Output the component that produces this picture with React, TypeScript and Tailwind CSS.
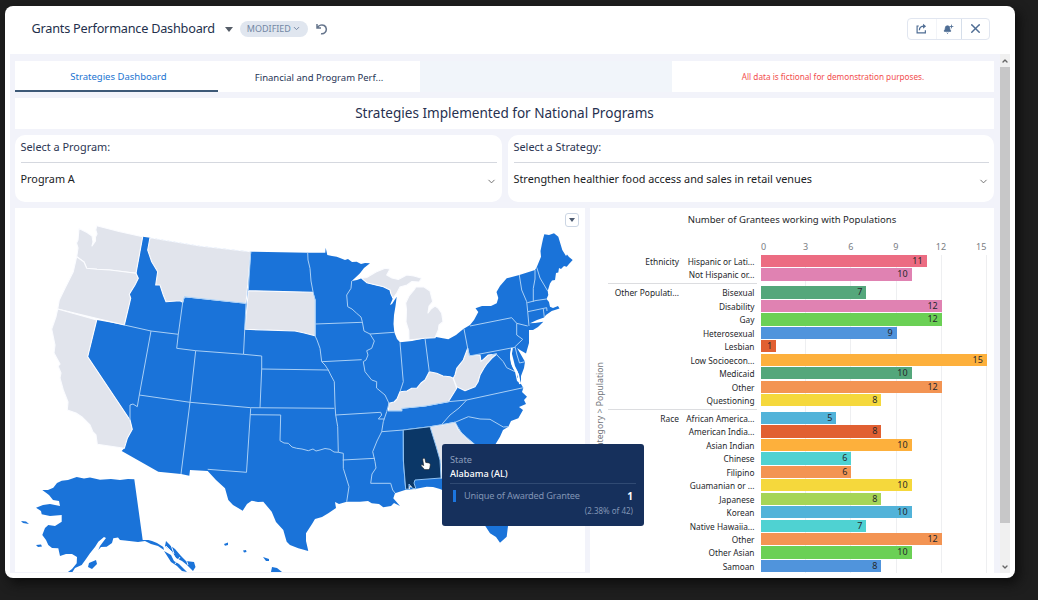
import { Bell, ChevronDown, ChevronUp, Plus, X } from "lucide-react";

type Row = { label: string; value: number; color: string };
type Group = { name: string; rows: Row[] };

const groups: Group[] = [
  {
    name: "Ethnicity",
    rows: [
      { label: "Hispanic or Lati...", value: 11, color: "#ec6c82" },
      { label: "Not Hispanic or...", value: 10, color: "#e082b2" },
    ],
  },
  {
    name: "Other Populati...",
    rows: [
      { label: "Bisexual", value: 7, color: "#54a77b" },
      { label: "Disability", value: 12, color: "#e082b2" },
      { label: "Gay", value: 12, color: "#6bd055" },
      { label: "Heterosexual", value: 9, color: "#5094dc" },
      { label: "Lesbian", value: 1, color: "#e16032" },
      { label: "Low Socioecon...", value: 15, color: "#fdb03c" },
      { label: "Medicaid", value: 10, color: "#54a77b" },
      { label: "Other", value: 12, color: "#f39453" },
      { label: "Questioning", value: 8, color: "#f5d83c" },
    ],
  },
  {
    name: "Race",
    rows: [
      { label: "African America...", value: 5, color: "#52b3d9" },
      { label: "American India...", value: 8, color: "#e16032" },
      { label: "Asian Indian", value: 10, color: "#fdb03c" },
      { label: "Chinese", value: 6, color: "#4fd2d2" },
      { label: "Filipino", value: 6, color: "#f39453" },
      { label: "Guamanian or ...", value: 10, color: "#f5d83c" },
      { label: "Japanese", value: 8, color: "#a6d557" },
      { label: "Korean", value: 10, color: "#52b3d9" },
      { label: "Native Hawaiia...", value: 7, color: "#4fd2d2" },
      { label: "Other", value: 12, color: "#f39453" },
      { label: "Other Asian", value: 10, color: "#6bd055" },
      { label: "Samoan", value: 8, color: "#5094dc" },
    ],
  },
];

const mainland =
  "142.7,236.7 150,237.7 200,246 250.7,251.7 307.7,252.7 325.3,252.7 325.7,247.7 327.3,255 332,256 336.7,256.7 340,258 345,260 348,259 352,262 356.7,261.7 361,264 365,263 370,263.3 364,268 360,273.3 355,278 351.7,281 357,280 361.7,278.3 366.7,282.7 375,285 383.3,286.7 388,288 390,290 391,294 393,298.3 390,305 392,304 396.7,296.7 395.5,306 394,315 393.5,324 394.3,332.3 397,339 400,342.3 412,341 425,338.3 436,337 448.3,339.3 456,335 463.3,329 470,325 474,320 478.3,312 475.5,308.3 482,306 491,306 496.7,303.3 498.3,298 496.5,292 500,286 506.7,278.3 519.3,275 535,270 536.7,267.3 541,256.7 540.5,251 541.7,245 543,239 544.3,234.3 549,235 554,233.3 558.3,236.7 562.3,250 566,256 567,254.5 569,257 572.7,260 569,264 566.7,266.7 564,266 561,269 559,268 558.3,272.5 556,273 555,280 552,280.5 550,283.5 547.7,291 548.3,295 546.5,299 549,302 550,306.7 553,308 558,306 559.5,308.5 551.7,311 546,315 544,317.5 537,320 530,323.3 535,323 543.3,321.7 538,327 533,330 529,330 529,335 529,343 526,353.5 520,350 517,348 520,353 525,361.7 524,368 521,376 521,383.3 519,379 517,377 518,372 515,366 513,358 511,350 510,356 512,366 515,371.7 517,381 521,384 523.3,388 522,392 527,396.7 524,400 526,404 519,407 523,410 518.3,418.3 511,421 508.3,426.7 503,430 500,436.7 495,445 488,454 484,465 486,480 492,495 502,512 508,526 506.7,536.7 500,542.7 496,537 490,533.3 484,524 474,505 460,490 449,493 440,489 433,487 426.7,486.7 415,489 405,490 395,493.3 393.3,498.3 400,506 394,503 391,506 383.3,507.3 379,504 371.7,503.3 368,501 360,501.7 346.7,501.7 339,504 335,502 336,508 328.3,513.3 322,517 315,519 312,524 306,533.3 306,541 308.3,551 298.3,548.3 290,545 286.7,541.7 285,536 283.3,530 276,522 271.7,511.7 263.3,501.7 258,502 251.7,500.7 247,504 242.7,510.7 233,505 228.3,500 225,488.3 216,480 207.7,471 190,470 189.3,475.7 181,474 158.3,471.7 121.7,451 124.3,448.3 124,444 127.3,438.3 132.3,429.3 130,420 87.7,356.7 96.7,320 124.3,325 130.7,298.3 129.3,294.3 138.3,278.3 136,273.3";

const grayStates = [
  "79,228.5 87,232.5 92,236 93,242 92,246 95.5,241 95.5,237 97,234 95.8,230 96.7,225.7 119,231.5 142.7,236.7 136,273.3 110,270 97,269.3 86.7,268.3 84,262 76.7,256.7 78,248 76.5,243 78,240",
  "76.7,256.7 84,262 86.7,268.3 97,269.3 110,270 136,273.3 138.3,278.3 135,285 129.3,294.3 130.7,298.3 124.3,325 57.7,309 59.3,300 65,288.3 73.3,271.7",
  "57.7,309 96.7,320 87.7,356.7 130,420 132.3,429.3 127.3,438.3 124.3,448.3 97.3,444.3 96,435 93,432 90,425 81.7,416.7 76,413 67.3,410 68,402 63.3,390 60,378 61,373 58,366 60,364 54,353 55,345 51.7,329 56,316.7",
  "150,237.7 200,246 250.7,251.7 246,303.3 184.3,296.7 182.7,302.3 180,300.7 166,301.7 163.3,295 160,285 155.7,285 157.7,271.7 151.7,261.7 147.7,250",
  "248.3,290.7 312.7,292.3 315,300 315,335.7 303.3,332.7 295,331 245,329.3",
  "409,340 408.8,331 406,322 406.5,310 405.7,303 409,296 414,290 416,287 424,287 430,291 432.7,301.7 429,306 428,313 431,309 435,306 438,308 441.7,313.3 443,321.7 439,325 438.3,330 435,337.7 425,338.3",
  "366.7,277.5 376,272 385,268.3 390,269 386.7,275 392,278 398.3,279.5 406.7,275 414,276 421.7,278.3 419,282 412,281.5 407,285 400,287 396.7,293.3 393,298.3 391,294 390,290 383.3,286.7 366.7,282.7 361.7,278.3",
  "388.3,410.7 389,403.3 394,402 397,399 400,391.7 407,391 411.7,388.3 416.7,388.3 421,383 425,380 429.3,371.7 436.7,373.3 443,376 450,376.7 453.3,378.3 456.7,388.3 448.3,401.7 425,406 401.7,408.3 401.7,410.7",
  "467.7,348.3 469.3,356 480,355 481,361.7 488.3,355 496.7,354 491.7,358.3 487.3,363.3 484,368 480,375 478,382 475,386.7 465,390.7 456.7,386.7 453.3,378.3 455,375 456.7,368.3 463.3,360",
  "430,426.7 442,425 455,422.3 458,429 461.7,433.3 469,440 475,445 486,462 480,478 441,478 441,464",
];

const borders = [
  "124.3,325 151,331 178.3,334.3",
  "182.7,302.3 178.3,334.3 176.7,348.3 195.7,350.7 243.5,354.3 261.7,356 261.7,369 328.3,370",
  "184.3,296.7 182.7,302.3",
  "184.3,296.7 246,303.3 243.5,354.3",
  "151,331 139.3,395 137.3,406.7 133,404 130,405 130,420",
  "195.7,350.7 190,402.3 181,474",
  "139.3,395 190,402.3 250.7,407.7 334.3,408.3",
  "261.7,369 260,407.8",
  "250.7,408.3 246.5,472.3 207.7,469.3",
  "250.2,414.7 280.7,415 280,440.7 284,443 288.3,443.3 292,447 296.7,448.3 302,449 308.3,450.7 313,449 316,451 320,450 325,448.5 330,449.3 334,452 338.3,452.3 343.3,453.3",
  "250.7,251.7 248.3,290.7",
  "307.7,252.7 308,260 310,268.3 311,281 313.3,293.3 315,300 315,335.7 317,340 320,348.3 321.7,361.7 325,365 328.3,370 330.7,375 334.3,381.7 335,405 335.7,415 337.7,426.7 338.3,452.3",
  "315,324 362.3,322.3",
  "351.7,281 351,288.3 346.7,295 347.7,306.7 352,309 356.7,313.3 361,317 362.3,321.7 364,331 370,334 374.3,341 371.7,348.3 366.7,350.7 368,355 366,360 363.3,361.7 365,371.7 371.7,380 376.7,381.7 376.5,388 385,395 389,403.3 386.7,411.7 383.3,421.7 381.7,431.7 377,441 372.7,451.7 375,461.7 376,468 372,474 370.7,483.3 390.7,483.3 392.7,490 395,493",
  "370,334 394.3,332.3",
  "321.7,361.7 361.7,359.7",
  "335.7,415 380.7,412.3 381.7,415 378.3,419 384.3,419",
  "400,342.3 402.7,375 403.3,381.7 400,391.7",
  "425,338.3 429.3,371.7",
  "464,329 467.7,348.3 469.3,356 515,347.3",
  "470,326 511.7,317.7 516.7,323.3 527.7,326",
  "516.7,323.3 516.7,335 522.7,339.3 515,346.7 517,355 519.5,363 525,361.7",
  "519.3,275 521.7,290 526.7,301.7 527.7,311.7 529,326",
  "535,270 535,279 533.3,288.3 533.3,301.7",
  "536.7,267.3 540,278 547.7,291",
  "527.3,302.7 536,300.5 546.5,299",
  "527.7,311.7 546.7,307.7 547,311",
  "543.3,309 544.3,317",
  "342.7,460 375,458.3",
  "343.3,453.3 343.3,468.3 349,486.7 346.7,501.7",
  "381.7,431.7 403.3,430 430,426.7 455,422.3 468.3,416.7 480,419 490,419.3 503.3,427 508,426.7",
  "388.3,410.7 401.7,410.7 401.7,408.3 425,406 448.3,401.7 466.7,400 523.3,387.7",
  "466.7,400 459,408 450,415 441.7,424.5",
  "403.3,430 403.3,460 405.7,489.3",
  "491.7,355 496,354 503.3,361.7 506.7,367.7 515,371.7",
  "455,422.3 461.7,433.3 475,445",
];

const alaska =
  "134.3,479.3 142.7,540 148.3,540 152,541 157,543 163.3,547 164,550 158,546 151,544 145,541 138,542 125,540.5 120,540 118,537.5 113.3,538.3 112,543 106.7,546.7 101,547 98.3,550 100,546 106,538 104,537 98.3,541.7 95,547 90,553.3 86,559 81.7,565 75,568 72,572.7 67,572.7 72,569 76.7,563.3 77,557 72,554 66,554 60,556 58.3,548.3 52,548 48.3,545 46,540 42.3,535 45,528 48.3,525 55,526 61.7,521.7 61.7,515 50,516 41.7,514.3 41,511 36,507.7 43,505 50,504 60,506 59,501 53,500 49,495 42.3,490 48,490 53.3,487.7 57,483 61.7,480.7 68,480 76.7,477 84,478.5 90,477.5 100,479.7 111,479 120,480 128,479";

const islands = [
  "166,541 171,546 175,549 181,556 186,561 194,562 195.5,567 193,571 187,565 182,561 176,558 171,551 165,546",
  "164,551 171,555 174,561 179,564 187,572 182,571 177,566 171,562",
  "89,563 96,560 97,564 92,569 88,567",
  "21,521 26,521.5 29,524 23,523",
  "36,545 41,544.5 42,546.5 38,547",
  "224,544 228,542.5 228,545 225,545.7",
  "243,550.5 246,550 246.5,552 244,552.5",
  "255,554.5 257,555",
  "263,557 269,559 269,561 266,561",
  "272,567 277,568 282,572 271,572",
];

function StateMap() {
  return (
    <svg viewBox="15 208 570 364" className="block h-[364px] w-[570px]" role="img">
      <polygon points={mainland} fill="#1a73d9" />
      <polygon points={alaska} fill="#1a73d9" />
      {islands.map((p) => (
        <polygon key={p} points={p} fill="#1a73d9" />
      ))}
      <path d="M166 546l6 6 4 7 7 6M171 545l3 9M180 557l-5 7M186 559l2 6" stroke="#fff" strokeWidth="0.9" fill="none" />
      <g fill="#e1e4ec" stroke="#fbfcff" strokeWidth="1.1" strokeLinejoin="round">
        {grayStates.map((p) => (
          <polygon key={p} points={p} />
        ))}
      </g>
      <g fill="none" stroke="#a9cff5" strokeWidth="1" strokeLinejoin="round">
        {borders.map((p) => (
          <polyline key={p} points={p} />
        ))}
      </g>
      <path d="M512 348c-2 8-1 15 2 20l4 6 2 10" stroke="#fff" strokeWidth="1.8" fill="none" />
      <polygon
        points="403.3,430 430,426.7 436,446 440,460 441,478 415,480 414,483 416,489 412,488 409,484 409,489 405.7,489.3 403.5,462"
        fill="#0b3767"
        stroke="#8fc2f3"
        strokeWidth="1"
      />
      <path d="M409.5 489l.5-3 1.5.5" fill="none" stroke="#eee" strokeWidth="1" />
      <path
        d="M423.2 458.5c.9-.5 1.7 0 1.9.9l.6 3 3 .5c1.2.3 1.7.9 1.6 2l-.5 3.3-1.2 1.4h-4l-3.3-3.7c-.4-.8.4-1.4 1.1-1l1.3.7-.9-5.7c-.1-.6 0-1.1.4-1.4z"
        fill="#fff"
        stroke="#222"
        strokeWidth="0.6"
      />
    </svg>
  );
}

function Header() {
  return (
    <header className="flex h-12 shrink-0 items-center pb-[3px] pl-[21.5px] pr-[20px]">
      <h1 className="text-[12.7px] tracking-[-0.22px] text-[#23304c]">Grants Performance Dashboard</h1>
      <span className="ml-[10px] mt-0.5 h-0 w-0 border-x-4 border-t-[5px] border-x-transparent border-t-[#565d68]" />
      <button className="ml-[7px] flex h-4 w-[68px] items-center justify-center gap-px rounded-full bg-[#e0e6ef] text-[9px] text-[#7286a4]">
        MODIFIED
        <ChevronDown size={9} strokeWidth={2.6} />
      </button>
      <svg viewBox="0 0 12 12" className="ml-2 h-3 w-3" fill="none" stroke="#66758c" strokeWidth="1.5">
        <path d="M1 1v4h4M1.4 4.8C3 2 6 1.2 8.2 2.5c2.5 1.5 2.8 5 .8 7-1 1-2.6 1.5-4 1.2" />
      </svg>
      <div className="ml-auto flex h-[22px] w-[83px] rounded border border-[#e1e6f0] text-[#4f6d94]">
        <button className="flex w-7 items-center justify-center">
          <svg viewBox="0 0 12 12" className="h-[11px] w-[11px]" fill="none" stroke="currentColor" strokeWidth="1.3">
            <path d="M3 3.3H1.2v7.4h9V8M3.7 7.8c0-3 2-4.3 5.3-4.3" />
            <path d="M7.7.8L11 3.5 7.7 6.3z" fill="currentColor" stroke="none" />
          </svg>
        </button>
        <button className="relative flex w-[26px] items-center justify-center border-l border-[#f2f4f8]">
          <Bell size={9} fill="currentColor" className="-ml-1 mt-0.5" />
          <Plus size={5} strokeWidth={4} className="absolute right-[7px] top-[5px]" />
        </button>
        <button className="flex w-7 items-center justify-center border-l border-[#d5deea]">
          <X size={15} strokeWidth={2.4} />
        </button>
      </div>
    </header>
  );
}

function Selector({ label, value, width }: { label: string; value: string; width: string }) {
  return (
    <section className={`flex h-[67px] flex-col rounded-[10px] bg-white px-[5.5px] ${width}`}>
      <h3 className="flex h-[28px] items-center border-b border-[#d5d8df] pb-[2px] text-[10.9px] text-[#2b3552]">{label}</h3>
      <div className="flex h-[33px] items-center justify-between text-[10.85px] text-[#202124]">
        {value}
        <ChevronDown size={11} strokeWidth={2} className="mt-1 text-[#666]" />
      </div>
    </section>
  );
}

function PopulationChart() {
  return (
    <section className="flex h-[365px] w-[404px] flex-col overflow-hidden bg-white text-[#26282c]">
      <h3 className="pt-[5px] text-center text-[9.55px] leading-[14px]">Number of Grantees working with Populations</h3>
      <div className="mt-[12px] flex h-[15px] text-[9px] leading-[15px] text-[#7a7d83]">
        <div className="w-[151px] shrink-0" />
        <div className="flex w-[253px]">
          {[0, 3, 6, 9, 12, 15].map((n) => (
            <span key={n} className={n === 0 ? "w-[42px] shrink-0 pl-5" : "w-[45.15px] shrink-0 text-center last:-ml-[5px]"}>
              {n}
            </span>
          ))}
        </div>
      </div>
      <div className="mt-px flex min-h-0 flex-1">
        <div className="w-[18px] shrink-0 pt-[107px]">
          <span className="ml-[4px] block w-[13px] rotate-180 whitespace-nowrap text-[8.7px] leading-[13px] text-[#72757b] [writing-mode:vertical-rl]">
            Category &gt; Population
          </span>
        </div>
        <div className="relative flex flex-1 flex-col">
          <div className="absolute inset-y-0 left-[153px] flex w-[227px]">
            {[0, 1, 2, 3, 4].map((n) => (
              <span key={n} className="w-[45.2px] shrink-0 border-r border-[#eeeff1]" />
            ))}
          </div>
          {groups.map((g, i) => (
            <div key={g.name} className={`relative flex shrink-0 ${i > 0 ? "mt-[4.6px]" : ""}`}>
              {i > 0 && <span className="absolute -top-[3px] left-0 w-[149px] border-t border-[#dcdde0]" />}
              <span className="w-[71px] shrink-0 text-right text-[8.4px] leading-[13.45px]">{g.name}</span>
              <div className="flex-1">
                {g.rows.map((r) => (
                  <div key={r.label} className="flex h-[13.45px]">
                    <span className="w-[75.5px] shrink-0 whitespace-nowrap text-right text-[8.3px] leading-[13.45px]">{r.label}</span>
                    <span
                      className="ml-[6.5px] h-[12.2px] pr-1 text-right text-[9px] leading-[12px]"
                      style={{ width: `${r.value * 15.06}px`, background: r.color }}
                    >
                      {r.value}
                    </span>
                  </div>
                ))}
              </div>
            </div>
          ))}
        </div>
      </div>
    </section>
  );
}

function Tooltip() {
  return (
    <div className="absolute left-[442px] top-[444px] flex h-[82px] w-[202px] flex-col rounded-[3px] bg-[#16305c] px-2 pt-[9px] text-[9.2px]">
      <span className="leading-[13px] text-[#8b9dbb]">State</span>
      <span className="font-medium leading-[15px] text-white">Alabama (AL)</span>
      <div className="mt-[2px] flex h-[25px] items-center border-t border-[#304a73] pl-[3px] pr-[3px] text-[9.2px] text-[#8194b4]">
        <span className="h-3 w-[3px] bg-[#1b75df]" />
        <span className="ml-2 tracking-[-0.18px]">Unique of Awarded Grantee</span>
        <span className="ml-auto text-[10px] font-bold text-white">1</span>
      </div>
      <span className="pr-[3px] text-right text-[8px] leading-[6px] text-[#8194b4]">(2.38% of 42)</span>
    </div>
  );
}

export default function App() {
  return (
    <div className="relative h-[600px] w-[1038px] overflow-hidden bg-[#1e1e1e] pl-[5px] pt-[6px] font-['Noto_Sans',sans-serif]">
      <main className="flex h-[572px] w-[1010px] flex-col rounded-[8px] bg-white px-[5px] pb-[5px] shadow-[4px_5px_12px_#0c0c0c]">
        <Header />
        <div className="flex h-[519px]">
          <div className="flex w-[990px] flex-col bg-[#f2f3fa] pl-[5px] pt-[7px]">
            <div className="flex h-[31px] w-[979px] bg-[#f1f5fa] text-[9.5px]">
              <button className="flex w-[203px] items-center justify-center border-b-2 border-[#3d5977] bg-white pl-1 pt-[3px] text-[#2174d1]">
                Strategies Dashboard
              </button>
              <button className="flex w-[202px] items-center justify-center bg-white pt-[3px] text-[#273456]">Financial and Program Perf...</button>
              <p className="ml-auto flex w-[322px] items-center justify-center bg-white pt-0.5 text-[8.2px] text-[#f24e4e]">
                All data is fictional for demonstration purposes.
              </p>
            </div>
            <h2 className="mt-[6px] flex h-[31px] w-[979px] items-center justify-center bg-white text-[13.55px] text-[#26304f]">
              Strategies Implemented for National Programs
            </h2>
            <div className="mt-[6px] flex gap-[6px]">
              <Selector label="Select a Program:" value="Program A" width="w-[487px]" />
              <Selector label="Select a Strategy:" value="Strengthen healthier food access and sales in retail venues" width="w-[486px]" />
            </div>
            <div className="mt-[6px] flex gap-[5px]">
              <section className="relative h-[364px] w-[570px] bg-white">
                <StateMap />
                <button className="absolute right-[6px] top-[5px] flex h-[14px] w-[14px] items-center justify-center rounded-[3px] border border-[#ccd6e4] bg-white">
                  <span className="h-0 w-0 border-x-[3px] border-t-4 border-x-transparent border-t-[#4d5a70]" />
                </button>
              </section>
              <PopulationChart />
            </div>
          </div>
          <div className="flex w-[10px] flex-col items-center bg-[#f0f0f0]">
            <span className="flex h-[13px] items-center">
              <ChevronUp size={8} strokeWidth={4} className="text-[#666]" />
            </span>
            <span className="h-[456px] w-full bg-[#c7c7c8]" />
            <span className="mt-auto flex h-[13px] items-center">
              <ChevronDown size={8} strokeWidth={4} className="text-[#666]" />
            </span>
          </div>
        </div>
      </main>
      <Tooltip />
    </div>
  );
}
